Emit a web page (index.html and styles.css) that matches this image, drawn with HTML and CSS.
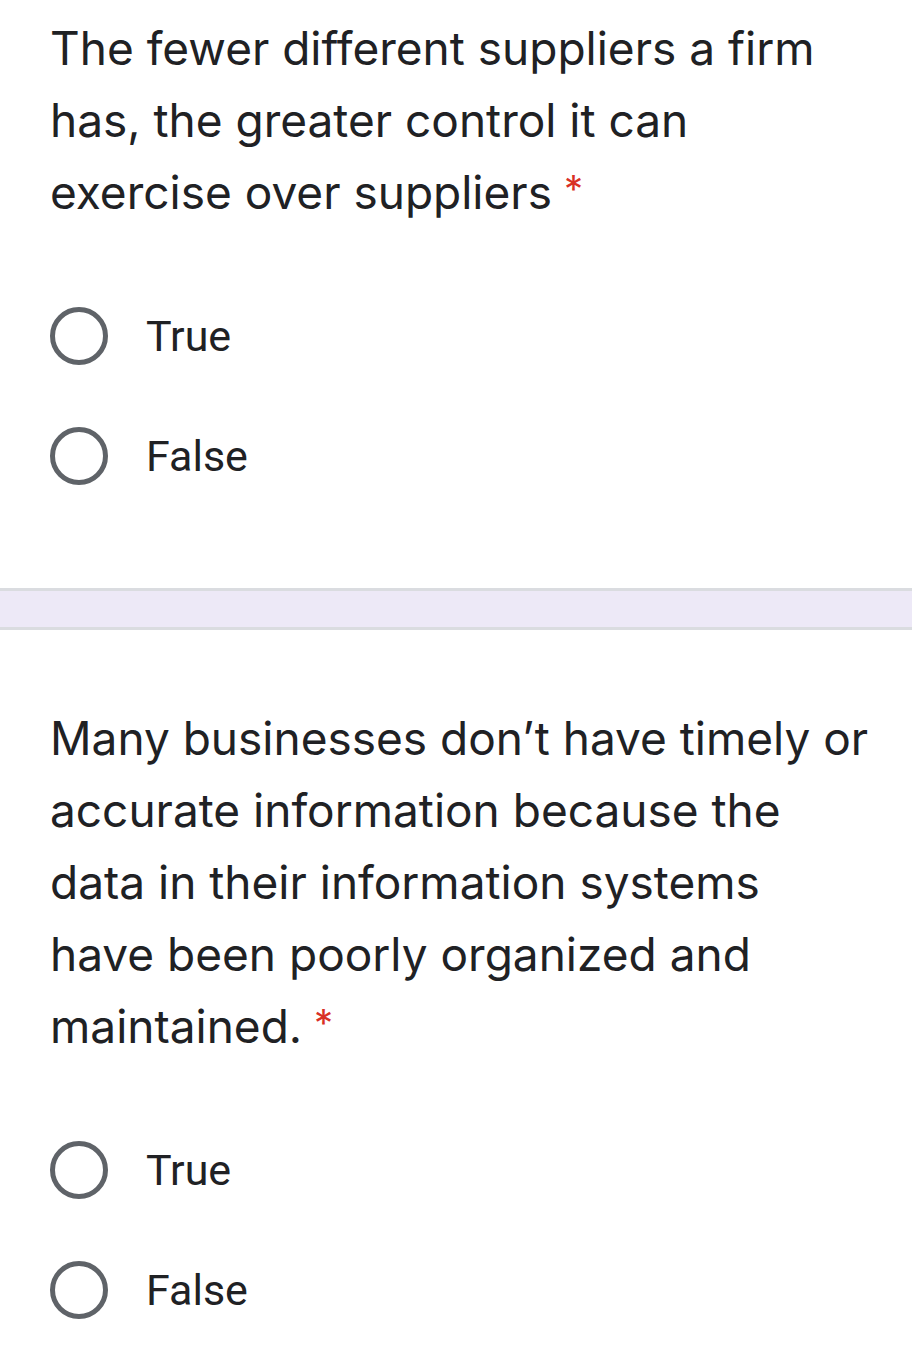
FILE: index.html
```html
<!DOCTYPE html>
<html>
<head>
<meta charset="utf-8">
<link rel="stylesheet" href="styles.css">
</head>
<body>
<div class="section first">
  <div class="question">The fewer different suppliers a firm has, the greater control it can exercise over suppliers<span class="req">*</span></div>
  <div class="options">
    <div class="option"><span class="radio"></span><span class="label">True</span></div>
    <div class="option"><span class="radio"></span><span class="label">False</span></div>
  </div>
</div>
<div class="band"></div>
<div class="section">
  <div class="question">Many businesses don’t have timely or accurate information because the data in their information systems have been poorly organized and maintained.<span class="req">*</span></div>
  <div class="options">
    <div class="option"><span class="radio"></span><span class="label">True</span></div>
    <div class="option"><span class="radio"></span><span class="label">False</span></div>
  </div>
</div>
</body>
</html>
```

FILE: styles.css
```css
html, body {
  margin: 0;
  padding: 0;
  background: #ffffff;
}
body {
  width: 912px;
  overflow: hidden;
}
.section {
  padding: 72px 43px 72px 50px;
}
.section.first {
  padding-top: 12px;
}
.question {
  font-family: Inter, "Noto Sans", sans-serif;
  font-size: 46px;
  line-height: 72px;
  color: #202124;
}
.req {
  color: #d93025;
  font-size: 38px;
  line-height: 0;
  margin-left: 12px;
  vertical-align: 6px;
}
.options {
  margin-top: 48px;
  display: flex;
  flex-direction: column;
}
.option {
  height: 120px;
  display: flex;
  align-items: center;
  gap: 38px;
}
.radio {
  width: 48px;
  height: 48px;
  border: 5px solid #5f6368;
  border-radius: 50%;
  flex: none;
}
.label {
  font-family: Roboto, "Noto Sans", sans-serif;
  font-size: 43px;
  color: #202124;
}
.band {
  height: 36px;
  background: #ede9f7;
  border-top: 3px solid #dadce0;
  border-bottom: 3px solid #dadce0;
}
```
